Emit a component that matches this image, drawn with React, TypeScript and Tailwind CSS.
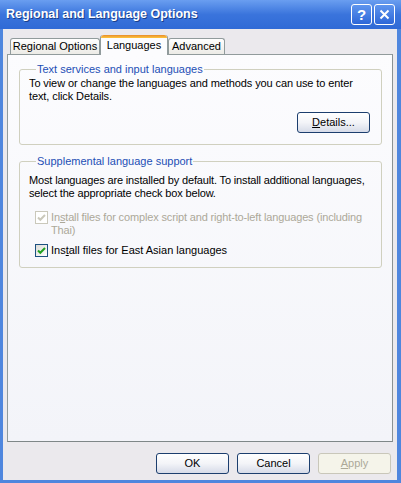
const ui = "font-['Tahoma','Liberation_Sans',sans-serif] text-[11px] leading-[13px]";

function Check({ disabled }: { disabled?: boolean }) {
  return (
    <div
      className={`flex h-[13px] w-[13px] shrink-0 items-center justify-center border ${
        disabled ? 'border-[#cac8bb] bg-white' : 'border-[#1c5180] bg-gradient-to-br from-[#dcdcd7] to-white'
      }`}
    >
      <svg width="11" height="11" viewBox="0 0 11 11">
        <path
          d="M2 5.5 L4.3 7.8 L9 3"
          fill="none"
          stroke={disabled ? '#cac8bb' : '#21a121'}
          strokeWidth="2"
        />
      </svg>
    </div>
  );
}

function Btn({ children, disabled }: { children: React.ReactNode; disabled?: boolean }) {
  return (
    <div
      className={`flex h-[21px] w-[73px] items-center justify-center rounded-[3px] border ${
        disabled
          ? 'border-[#c9c7ba] bg-[#f5f4ea] text-[#aca899]'
          : 'border-[#1c3e6e] bg-gradient-to-b from-white via-[#f3f4f8] to-[#d6dbe8] text-black'
      }`}
    >
      {children}
    </div>
  );
}

export default function App() {
  return (
    <div className={`flex h-[483px] w-[401px] flex-col bg-[#4f86de] ${ui}`}>
      {/* title bar */}
      <div className="flex h-[29px] shrink-0 items-center bg-gradient-to-b from-[#6a9ef0] via-[#3a74dc] to-[#2f6ad6] pl-[6px] pr-[6px]">
        <span className="font-['Liberation_Sans',sans-serif] text-[12.5px] font-bold text-white [text-shadow:1px_1px_0_#1a3f8a]">
          Regional and Language Options
        </span>
        <div className="ml-auto flex gap-[2px]">
          <div className="flex h-[21px] w-[21px] items-center justify-center rounded-[3px] border border-white bg-gradient-to-b from-[#5f95ee] to-[#2d67d8] font-['Liberation_Sans',sans-serif] text-[15px] font-bold text-white">
            ?
          </div>
          <div className="flex h-[21px] w-[21px] items-center justify-center rounded-[3px] border border-white bg-gradient-to-b from-[#5f95ee] to-[#2d67d8]">
            <svg width="11" height="11" viewBox="0 0 11 11">
              <path d="M1.5 1.5 L9.5 9.5 M9.5 1.5 L1.5 9.5" stroke="white" strokeWidth="2" />
            </svg>
          </div>
        </div>
      </div>

      {/* body */}
      <div className="ml-[3px] mr-[4px] mb-[3px] flex flex-1 flex-col bg-[#ebe9ed] pl-[4px] pr-[4px] pt-[6px]">
        {/* tabs */}
        <div className="relative z-10 flex h-[19px] items-end pl-[3px]">
          <div className="flex h-[16px] w-[90px] items-center justify-center rounded-t-[3px] border border-b-0 border-[#919b9c] bg-gradient-to-b from-white to-[#ecebe6]">
            Regional Options
          </div>
          <div className="-mb-px flex h-[20px] w-[68px] flex-col rounded-t-[3px] border-x border-[#919b9c] bg-[#fcfcfe]">
            <div className="h-[3px] rounded-t-[3px] bg-gradient-to-b from-[#e68b2c] to-[#ffc73c]" />
            <div className="flex flex-1 items-center justify-center pb-[2px]">Languages</div>
          </div>
          <div className="flex h-[16px] w-[57px] items-center justify-center rounded-t-[3px] border border-b-0 border-[#919b9c] bg-gradient-to-b from-white to-[#ecebe6]">
            Advanced
          </div>
        </div>

        {/* panel */}
        <div className="flex h-[388px] flex-col border border-[#919b9c] border-r-[#8b9293] border-b-[#7f8788] bg-gradient-to-b from-[#fcfcfe] to-[#f3f4f9] pl-[11px] pr-[10px] pt-[8px]">
          <fieldset className="rounded-[3px] border border-[#d0d0bf] px-[9px] pb-[11px]">
            <legend className="ml-[7px] px-[1px] text-[#1d4fb5]">Text services and input languages</legend>
            <p className="mt-[1px] whitespace-nowrap tracking-[-0.1px]">
              To view or change the languages and methods you can use to enter
              <br />
              text, click Details.
            </p>
            <div className="mt-[9px] flex justify-end pr-[2px]">
              <Btn>
                <span>
                  <u>D</u>etails...
                </span>
              </Btn>
            </div>
          </fieldset>

          <fieldset className="mt-[10px] rounded-[3px] border border-[#d0d0bf] px-[9px] pb-[10px]">
            <legend className="ml-[7px] px-[1px] text-[#1d4fb5]">Supplemental language support</legend>
            <p className="mt-[6px] whitespace-nowrap tracking-[-0.15px]">
              Most languages are installed by default. To install additional languages,
              <br />
              select the appropriate check box below.
            </p>
            <div className="mt-[11px] flex gap-[3px] pl-[6px] text-[#aca899]">
              <Check disabled />
              <span className="whitespace-nowrap tracking-[-0.15px]">
                In<u>s</u>tall files for complex script and right-to-left languages (including
                <br />
                Thai)
              </span>
            </div>
            <div className="mt-[7px] flex gap-[3px] pl-[6px]">
              <Check />
              <span className="whitespace-nowrap">
                Ins<u>t</u>all files for East Asian languages
              </span>
            </div>
          </fieldset>
        </div>

        {/* buttons */}
        <div className="mt-[11px] flex justify-end gap-[8px] pr-[2px]">
          <Btn>OK</Btn>
          <Btn>Cancel</Btn>
          <Btn disabled>
            <span>
              <u>A</u>pply
            </span>
          </Btn>
        </div>
      </div>
    </div>
  );
}
